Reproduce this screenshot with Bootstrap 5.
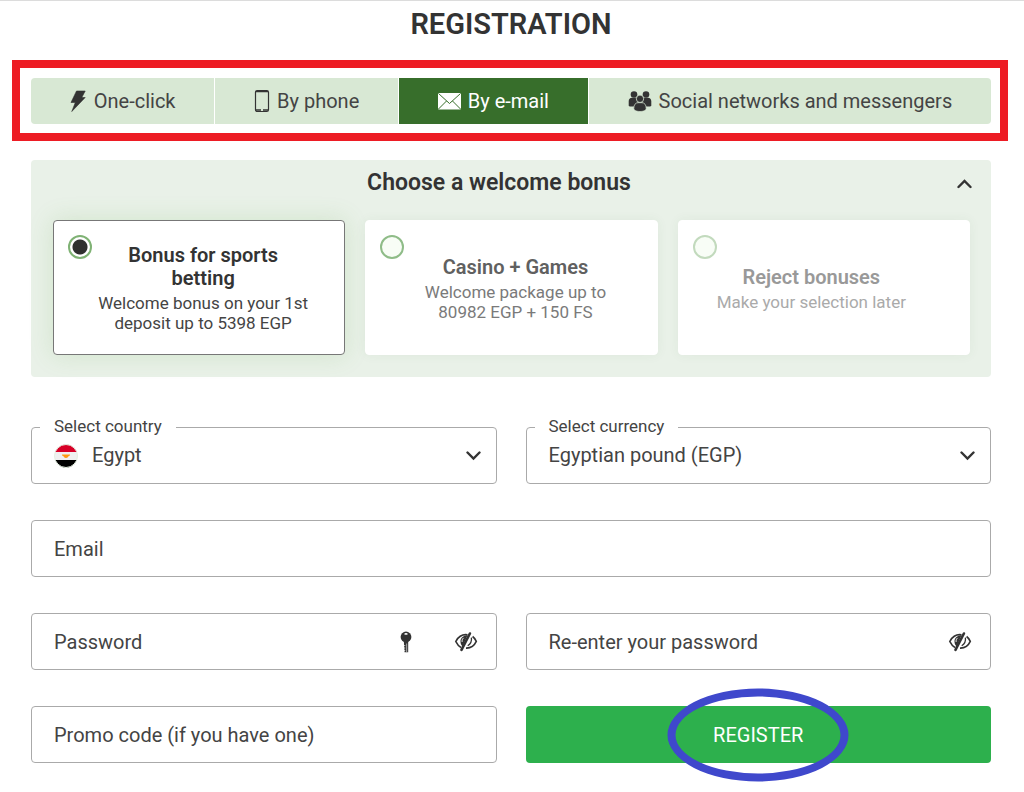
<!DOCTYPE html>
<html lang="en">
<head>
<meta charset="utf-8">
<meta name="viewport" content="width=device-width, initial-scale=1">
<title>Registration</title>
<link href="https://cdn.jsdelivr.net/npm/bootstrap@5.3.0/dist/css/bootstrap.min.css" rel="stylesheet">
<style>
  body { font-family: Roboto, "Liberation Sans", sans-serif; color: #333; background: #fff; border-top: 1px solid #dcdcdc; }
  svg { flex: none; display: block; }
  .page-title { font-size: 29px; line-height: 32px; font-weight: 600; padding: 7px 33px 20px 31px; }
  .method-frame { border: 8px solid #ed1c24; margin: 0 16px 19px 12px; padding: 10px 9px 9px 11px; }
  .methods { gap: 1px; border-radius: 4px; overflow: hidden; }
  .method { border: 0; background: #d8e8d4; color: #444; font-size: 20px; line-height: 24px; padding: 11px 16px; gap: 7px; }
  .method.active { background: #376e2b; color: #fff; }
  .method svg { color: #333; }
  .method.active svg { color: #fff; }
  .content { padding: 0 33px 24px 31px; }
  .bonus-panel { background: #e9f1e8; border-radius: 4px; padding: 8px 19px 22px 22px; margin-bottom: 50px; }
  .bonus-title { font-size: 23px; line-height: 30px; font-weight: 600; }
  .bonus-toggle { padding: 2px 0 0 12px; border: 0; background: none; color: #333; }
  .bonus-list { padding: 22px 2px 0 0; }
  .bonus-grid { --bs-gutter-x: 20px; --bs-gutter-y: 20px; }
  .bonus { background: #fff; border: 1px solid #fff; border-radius: 4px; min-height: 135px; padding: 14px 30px 14px 14px; cursor: pointer; box-shadow: 0 0 12px rgba(55,110,43,.06); }
  .bonus.chosen { border-color: #777; box-shadow: 0 0 24px rgba(100,170,70,.18); }
  .bonus .form-check-input { flex: none; width: 24px; height: 24px; margin: 0; border: 2px solid #8fbc88; background: #f8fdf6; }
  .bonus .form-check-input:checked { background: radial-gradient(circle, #2f2f2f 7px, #fff 8px); border-color: #7fb274; }
  .bonus-text { padding-top: 2px; }
  .bonus-name { font-size: 20px; line-height: 23px; font-weight: 600; margin-bottom: 3px; padding: 0 8px; }
  .bonus-info { font-size: 17px; line-height: 20px; color: #444; }
  .bonus.dim .bonus-name { color: #606060; }
  .bonus.dim .bonus-info { color: #7a7a7a; }
  .bonus.faint .bonus-name { color: #999; }
  .bonus.faint .bonus-info { color: #aaa; }
  .bonus.faint .form-check-input { border-color: #c2dabd; }
  .fields { --bs-gutter-x: 29px; --bs-gutter-y: 36px; }
  .field { border: 1px solid #aaa; border-radius: 4px; height: 57px; }
  .field-label { top: -14px; left: 8px; padding: 0 14px; background: #fff; font-size: 17px; line-height: 24px; color: #444; }
  .field .form-control, .field .form-select { border: 0; font-size: 20px; line-height: 24px; color: #444; background-color: transparent; padding: 0 22px; height: 100%; flex: 1 1 0; min-width: 0; }
  .field .form-control::placeholder { color: #444; opacity: 1; }
  .field .form-select { padding-bottom: 2px; background-image: url("data:image/svg+xml,%3Csvg xmlns='http://www.w3.org/2000/svg' viewBox='0 0 15 10'%3E%3Cpath d='M1.5 1.5l6 6 6-6' fill='none' stroke='%23333' stroke-width='2.4' stroke-linecap='round'/%3E%3C/svg%3E"); background-size: 15px 10px; background-position: right 15px center; }
  .flag { margin-left: 22px; }
  .field .flag + .form-select { padding-left: 14px; }
  .field-icon { border: 0; background: none; padding: 0; color: #333; }
  .key-btn { margin-right: 42px; }
  .eye-btn { margin-right: 18px; }
  .register { height: 57px; background: #2db04d; color: #fff; border: 0; border-radius: 4px; font-size: 20px; line-height: 24px; }
  .ring { width: 181px; height: 93px; border: 8px solid #3f48cc; border-radius: 50%; pointer-events: none; }
</style>
</head>
<body>
<svg width="0" height="0" class="position-absolute" aria-hidden="true">
  <symbol id="eye-off" viewBox="0 0 24 20">
    <path d="M13.500 2.900C8 1.800 3.600 5.500 1.800 9.500c1.300 2.700 3 4.700 5.200 5.900" fill="none" stroke="currentColor" stroke-width="1.700"/>
    <path d="M13.500 3.200C9 3.200 6.300 6.200 6.500 9.800c.1 2 .9 3.700 2.100 4.700z" fill="currentColor"/>
    <path d="M9.600 5.900c-1.200 1-1.700 2.300-1.500 4" fill="none" stroke="#fff" stroke-width="1"/>
    <path d="M15.900 1.500L7.500 17.900" stroke="currentColor" stroke-width="2.600" stroke-linecap="round"/>
    <path d="M18.600 4.500c1.600 1.200 2.900 2.900 3.700 4.900-2 4.300-5.600 6.900-10.300 6.700" fill="none" stroke="currentColor" stroke-width="1.600"/>
    <path d="M17.400 5.600c.5 3.600-1 6.500-3.700 8.100" fill="none" stroke="currentColor" stroke-width="1.300"/>
  </symbol>
</svg>

<h1 class="page-title text-center mb-0">REGISTRATION</h1>

<div class="method-frame">
  <div class="methods d-flex flex-wrap" role="group" aria-label="Registration method">
    <button type="button" class="method flex-grow-1 d-flex justify-content-center align-items-center">
      <svg width="17" height="24" viewBox="0 0 17 24" fill="currentColor"><path d="M6.500 2h8.700l-3.400 6.500h3.400L1.800 22.500l3.500-9H1z" stroke="currentColor" stroke-width=".6" stroke-linejoin="round"/></svg>
      One-click
    </button>
    <button type="button" class="method flex-grow-1 d-flex justify-content-center align-items-center">
      <svg width="16" height="24" viewBox="0 0 16 24"><rect x="1.500" y="1.500" width="13" height="21" rx="1.800" fill="none" stroke="currentColor" stroke-width="1.200"/><path d="M2 2.500h12M2 21h5M9 21h5" stroke="currentColor" stroke-width="1.400"/></svg>
      By phone
    </button>
    <button type="button" class="method active flex-grow-1 d-flex justify-content-center align-items-center" aria-pressed="true">
      <svg width="23" height="18" viewBox="0 0 23 18"><rect x="0" y="1" width="23" height="16.500" rx="1" fill="currentColor"/><path d="M.5 1.500l11 10 11-10M.5 17l8-8M22.500 17l-8-8" fill="none" stroke="#376e2b" stroke-width="1"/></svg>
      By e-mail
    </button>
    <button type="button" class="method flex-grow-1 d-flex justify-content-center align-items-center">
      <svg width="24" height="22" viewBox="0 0 24 22" fill="currentColor"><circle cx="6" cy="4.500" r="3.300"/><circle cx="18" cy="4.500" r="3.300"/><path d="M.7 15.500V11.300c0-2.200 1.300-3.500 3.300-3.500h3c1.600 0 2.600.6 3 1.700V12l-3 4.500H3c-1.500 0-2.300-.3-2.300-1zM23.300 15.500V11.300c0-2.200-1.300-3.500-3.300-3.500h-3c-1.600 0-2.600.6-3 1.700V12l3 4.500h4c1.500 0 2.300-.3 2.300-1z"/><circle cx="12" cy="8.800" r="3.700" stroke="#d8e8d4" stroke-width=".8"/><path d="M5.800 18.500c0-3.700 1.700-5.800 4.200-5.800h4c2.500 0 4.200 2.100 4.200 5.800 0 1.900-3 3-6.200 3s-6.200-1.100-6.200-3z" stroke="#d8e8d4" stroke-width=".7"/></svg>
      Social networks and messengers
    </button>
  </div>
</div>

<main class="content">
  <section class="bonus-panel">
    <div class="d-flex">
      <h2 class="bonus-title flex-grow-1 text-center mb-0">Choose a welcome bonus</h2>
      <button type="button" class="bonus-toggle" data-bs-toggle="collapse" data-bs-target="#bonusList" aria-expanded="true" aria-controls="bonusList" aria-label="Show or hide bonuses">
        <svg width="15" height="10" viewBox="0 0 15 10"><path d="M1.500 8l6-6 6 6" fill="none" stroke="currentColor" stroke-width="2.400" stroke-linecap="round"/></svg>
      </button>
    </div>
    <div class="collapse show" id="bonusList">
      <div class="bonus-list">
        <div class="row bonus-grid mt-0">
          <div class="col-12 col-md-4 mt-0">
            <label class="bonus chosen d-flex h-100" for="bonusSports">
              <input class="form-check-input" type="radio" name="bonus" id="bonusSports" checked>
              <span class="bonus-text align-self-center text-center">
                <span class="bonus-name d-block">Bonus for sports betting</span>
                <span class="bonus-info d-block">Welcome bonus on your 1st deposit up to 5398 EGP</span>
              </span>
            </label>
          </div>
          <div class="col-12 col-md-4 mt-0">
            <label class="bonus dim d-flex h-100" for="bonusCasino">
              <input class="form-check-input" type="radio" name="bonus" id="bonusCasino">
              <span class="bonus-text align-self-center text-center">
                <span class="bonus-name d-block">Casino + Games</span>
                <span class="bonus-info d-block">Welcome package up to 80982 EGP + 150 FS</span>
              </span>
            </label>
          </div>
          <div class="col-12 col-md-4 mt-0">
            <label class="bonus faint d-flex h-100" for="bonusNone">
              <input class="form-check-input" type="radio" name="bonus" id="bonusNone">
              <span class="bonus-text align-self-center text-center">
                <span class="bonus-name d-block">Reject bonuses</span>
                <span class="bonus-info d-block">Make your selection later</span>
              </span>
            </label>
          </div>
        </div>
      </div>
    </div>
  </section>

  <form onsubmit="return false">
    <div class="row fields">
      <div class="col-12 col-md-6">
        <div class="field position-relative d-flex align-items-center">
          <label class="field-label position-absolute" for="country">Select country</label>
          <svg class="flag" width="24" height="24" viewBox="0 0 24 24"><clipPath id="disc"><circle cx="12" cy="12" r="11.500"/></clipPath><g clip-path="url(#disc)"><path fill="#f0f0f0" d="M0 0h24v24H0z"/><path fill="#d80027" d="M0 0h24v8H0z"/><path fill="#000" d="M0 16h24v8H0z"/><path fill="#ff9811" d="M8 10.500h8c0 1-.7 1.700-1.600 1.700 0 .8-.8 1.500-2.400 1.700-1.600-.2-2.400-.9-2.400-1.700-.9 0-1.600-.7-1.600-1.700z"/></g><circle cx="12" cy="12" r="11.500" fill="none" stroke="#e4efe1"/></svg>
          <select class="form-select" id="country"><option>Egypt</option></select>
        </div>
      </div>
      <div class="col-12 col-md-6">
        <div class="field position-relative d-flex align-items-center">
          <label class="field-label position-absolute" for="currency">Select currency</label>
          <select class="form-select" id="currency"><option>Egyptian pound (EGP)</option></select>
        </div>
      </div>
      <div class="col-12">
        <div class="field d-flex align-items-center">
          <input type="email" class="form-control" id="email" placeholder="Email" aria-label="Email">
        </div>
      </div>
      <div class="col-12 col-md-6">
        <div class="field d-flex align-items-center">
          <input type="password" class="form-control" id="password" placeholder="Password" aria-label="Password">
          <button type="button" class="field-icon key-btn" aria-label="Generate password">
            <svg width="12" height="22" viewBox="0 0 12 22"><circle cx="6" cy="6" r="5.400" fill="currentColor"/><path d="M3.800 10h4.400v11.200H4.600z" fill="currentColor"/><ellipse cx="6" cy="2.900" rx="1.700" ry=".9" fill="#fff"/><path d="M6.700 12.500v8.500M4 14.500h1.300M4 17h1.300M4 19.500h1.300" stroke="#fff" stroke-width=".6"/></svg>
          </button>
          <button type="button" class="field-icon eye-btn" aria-label="Show password"><svg width="24" height="20"><use href="#eye-off"/></svg></button>
        </div>
      </div>
      <div class="col-12 col-md-6">
        <div class="field d-flex align-items-center">
          <input type="password" class="form-control" id="password2" placeholder="Re-enter your password" aria-label="Re-enter your password">
          <button type="button" class="field-icon eye-btn" aria-label="Show repeated password"><svg width="24" height="20"><use href="#eye-off"/></svg></button>
        </div>
      </div>
      <div class="col-12 col-md-6">
        <div class="field d-flex align-items-center">
          <input type="text" class="form-control" id="promo" placeholder="Promo code (if you have one)" aria-label="Promo code (if you have one)">
        </div>
      </div>
      <div class="col-12 col-md-6">
        <div class="position-relative">
          <button type="submit" class="register w-100">REGISTER</button>
          <span class="ring position-absolute top-50 start-50 translate-middle"></span>
        </div>
      </div>
    </div>
  </form>
</main>
<script src="https://cdn.jsdelivr.net/npm/bootstrap@5.3.0/dist/js/bootstrap.bundle.min.js"></script>
</body>
</html>
